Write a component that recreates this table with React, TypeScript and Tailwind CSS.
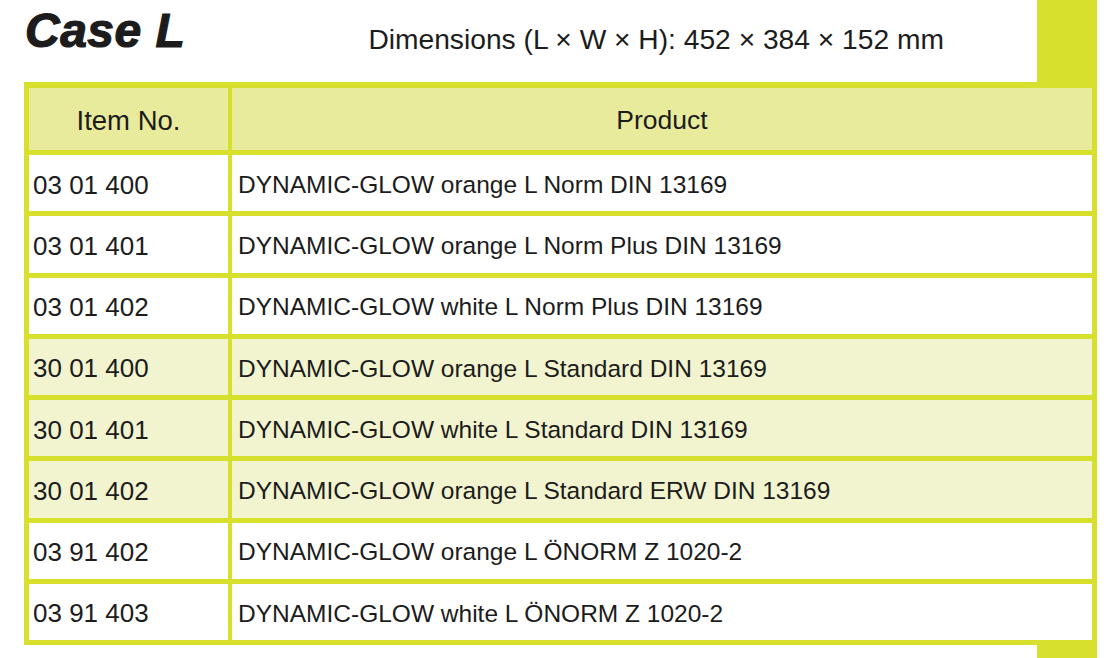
const rows = [
  { no: "03 01 400", product: "DYNAMIC-GLOW orange L Norm DIN 13169", tint: false },
  { no: "03 01 401", product: "DYNAMIC-GLOW orange L Norm Plus DIN 13169", tint: false },
  { no: "03 01 402", product: "DYNAMIC-GLOW white L Norm Plus DIN 13169", tint: false },
  { no: "30 01 400", product: "DYNAMIC-GLOW orange L Standard DIN 13169", tint: true },
  { no: "30 01 401", product: "DYNAMIC-GLOW white L Standard DIN 13169", tint: true },
  { no: "30 01 402", product: "DYNAMIC-GLOW orange L Standard ERW DIN 13169", tint: true },
  { no: "03 91 402", product: "DYNAMIC-GLOW orange L ÖNORM Z 1020-2", tint: false },
  { no: "03 91 403", product: "DYNAMIC-GLOW white L ÖNORM Z 1020-2", tint: false },
];

export default function App() {
  return (
    <div className="h-[658px] w-[1112px] overflow-hidden bg-white text-[#1c1c1c] [font-family:'Liberation_Sans',Arial,sans-serif]">
      {/* heading strip */}
      <div className="flex h-[82px] items-start">
        <h1 className="ml-[25px] mt-[3px] text-[48px] font-bold italic leading-[56px] tracking-[0.5px] [-webkit-text-stroke:1.2px_#1c1c1c]">
          Case L
        </h1>
        <p className="ml-[183px] mt-[20px] text-[28.2px] leading-[38px]">
          Dimensions (L × W × H): 452 × 384 × 152 mm
        </p>
        <div className="ml-auto mr-[15px] h-full w-[60px] bg-[#d6e02d]" />
      </div>

      {/* table */}
      <div className="ml-[24px] grid w-[1073px] grid-cols-[199px_1fr] gap-x-[4px] gap-y-[5px] bg-[#d6e02d] px-[5px] pb-[5px] pt-[6px]">
        <div className="flex h-[62px] items-center justify-center bg-[#e8eb9c] pt-[3px] text-[27.5px]">Item No.</div>
        <div className="flex h-[62px] items-center justify-center bg-[#e8eb9c] pt-[3px] text-[26.5px]">Product</div>
        {rows.map((r) => (
          <div key={r.no} className="contents">
            <div className={`flex h-[56.25px] items-center pl-[4px] pt-[4px] text-[26px] ${r.tint ? "bg-[#f2f4cf]" : "bg-white"}`}>
              {r.no}
            </div>
            <div className={`flex h-[56.25px] items-center pl-[6px] pt-[4px] text-[24.5px] ${r.tint ? "bg-[#f2f4cf]" : "bg-white"}`}>
              {r.product}
            </div>
          </div>
        ))}
      </div>

      <div className="ml-[1037px] h-[20px] w-[60px] bg-[#d6e02d]" />
    </div>
  );
}
